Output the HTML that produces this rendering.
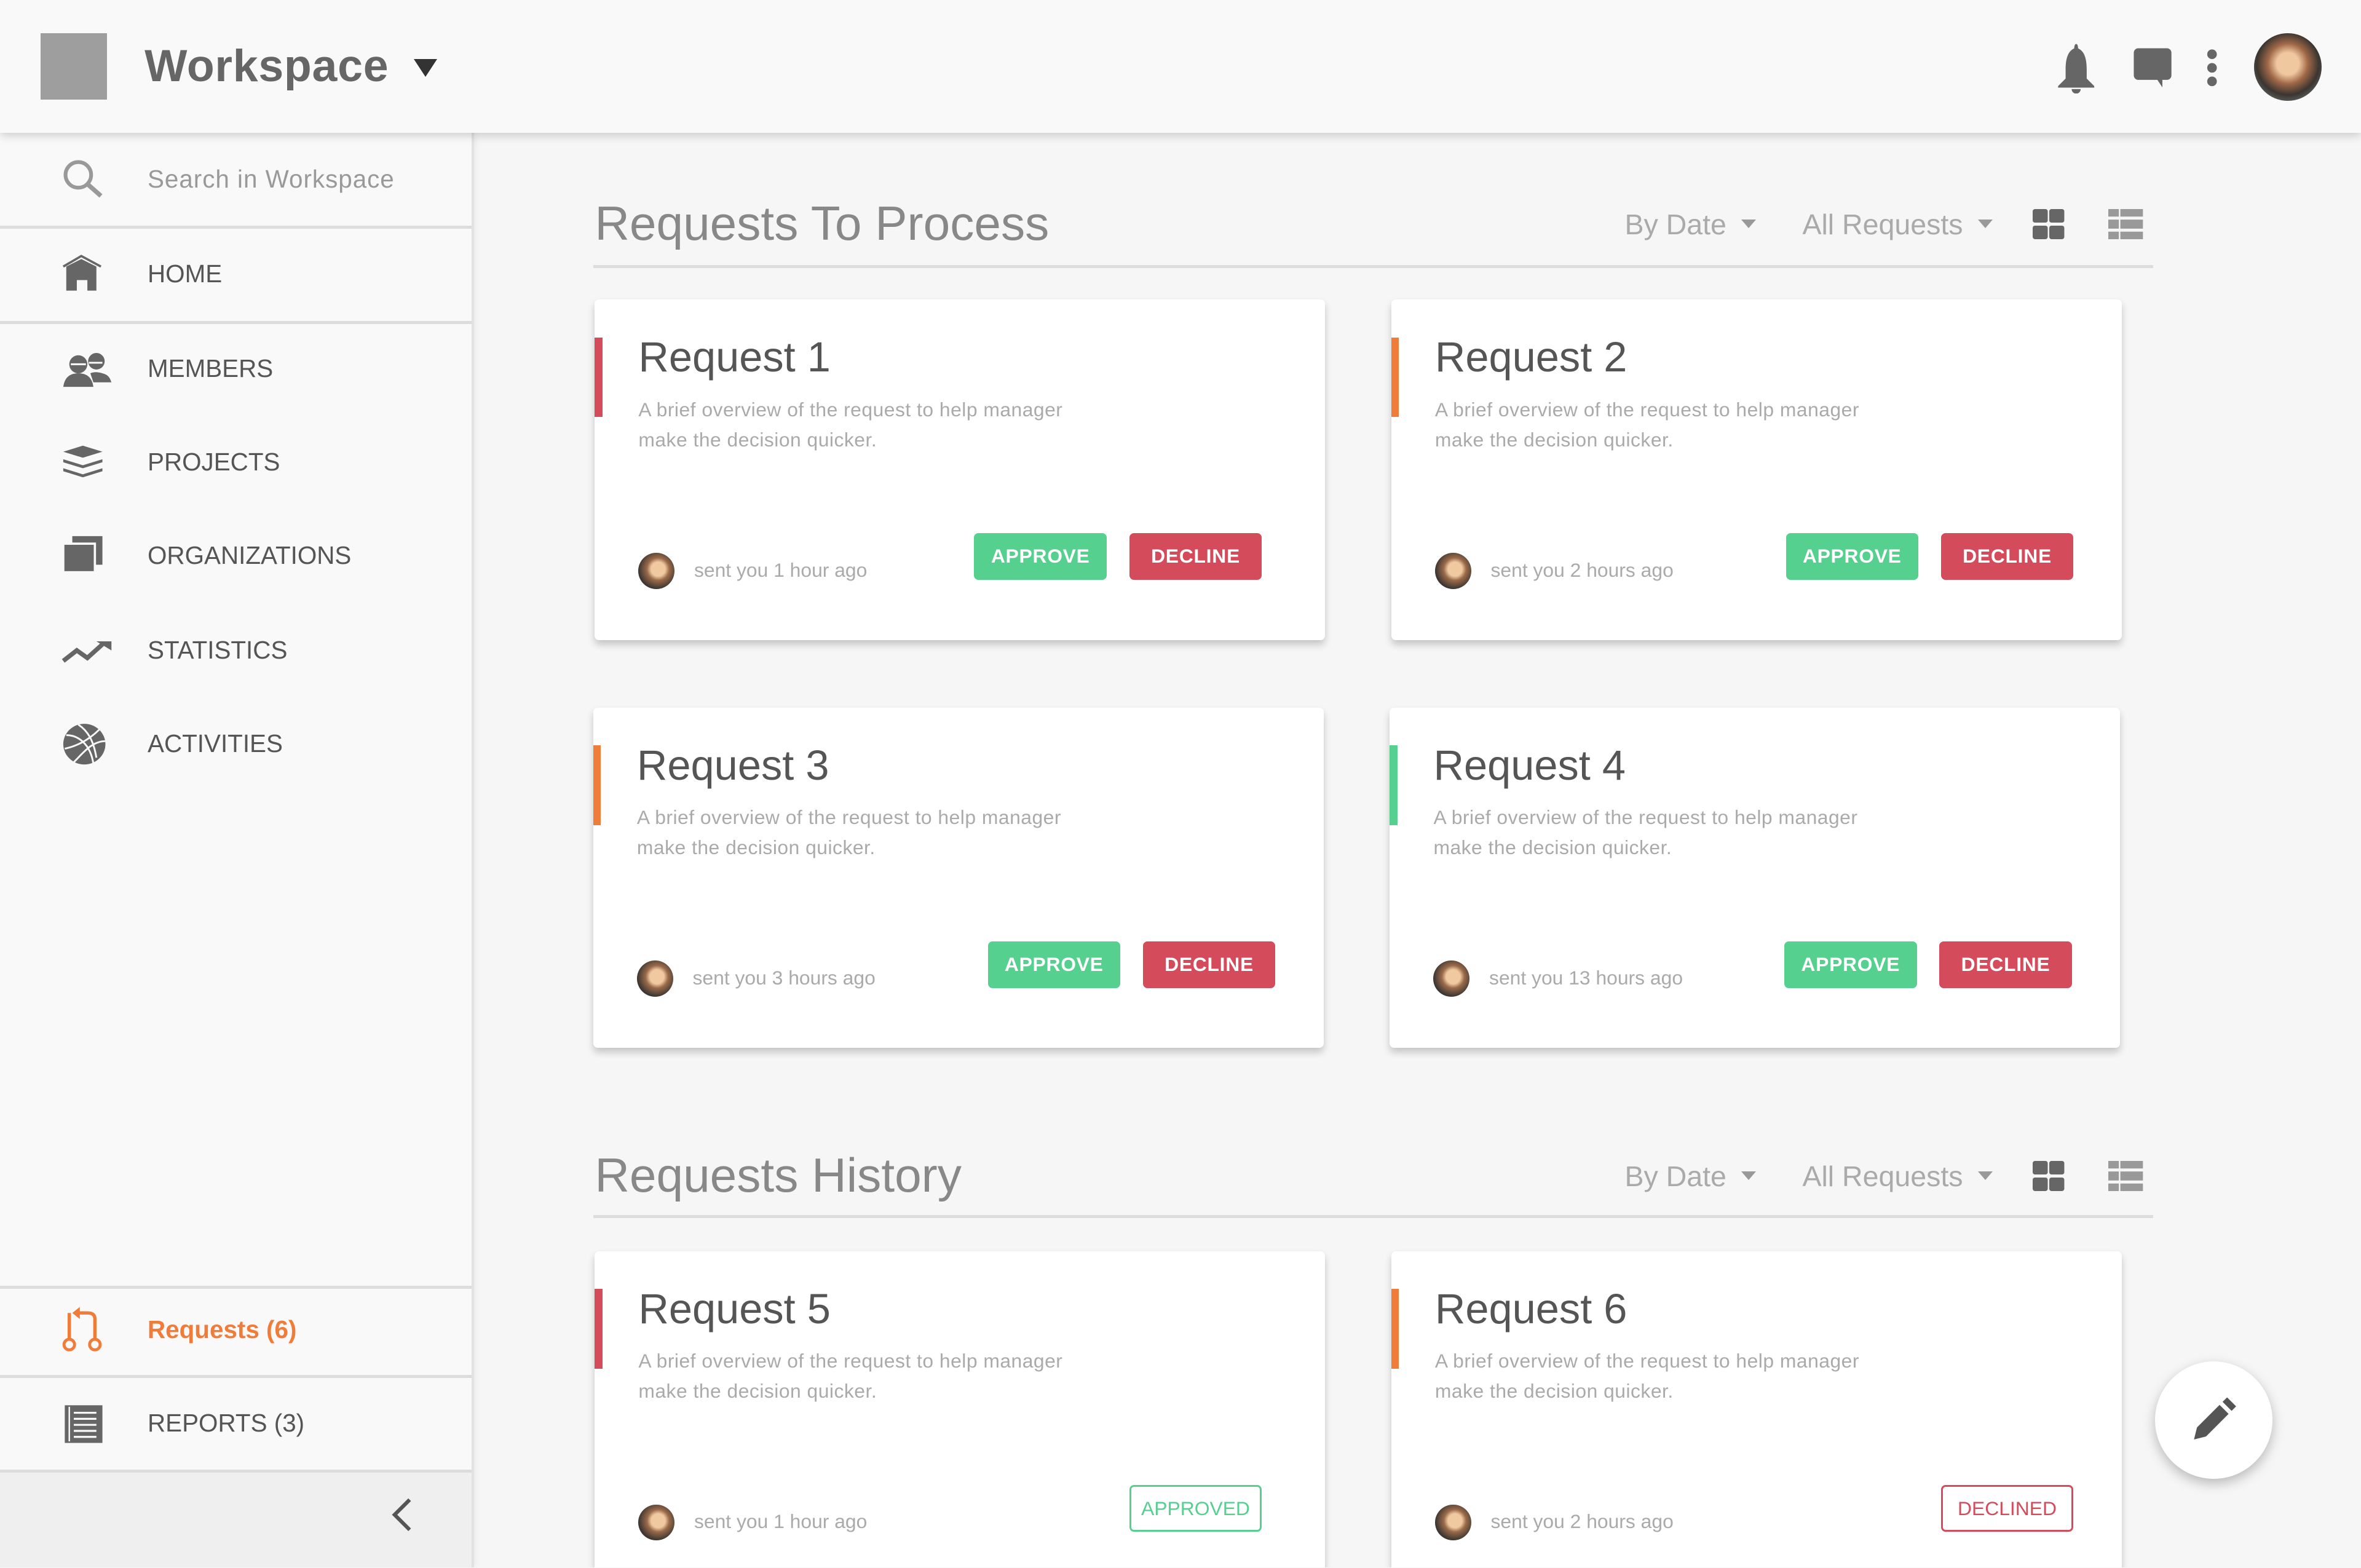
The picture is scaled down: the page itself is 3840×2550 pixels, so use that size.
<!DOCTYPE html>
<html><head><meta charset="utf-8"><style>
*{margin:0;padding:0;box-sizing:border-box}
html,body{width:3840px;height:2550px;overflow:hidden;background:#f6f6f6}
#r{zoom:2.449;width:1568px;height:1041px;position:relative;font-family:"Liberation Sans",sans-serif;background:#f6f6f6;overflow:hidden}
.hdr{position:absolute;left:0;top:0;width:1568px;height:88px;background:#f9f9f9;box-shadow:0 2px 6px rgba(0,0,0,.18);z-index:5}
.side{position:absolute;left:0;top:88px;width:315px;height:953px;background:#f9f9f9;border-right:2px solid #e2e2e2;box-shadow:1px 0 4px rgba(0,0,0,.06)}
.row{position:absolute;left:0;width:313px;height:62px;display:flex;align-items:center;color:#555;font-size:16.5px;letter-spacing:0}
.row svg{position:absolute;left:40px}
.row span{position:absolute;left:98px}
.line{position:absolute;left:0;width:313px;height:2px;background:#ddd}
.sec{position:absolute;left:395px;font-size:32px;color:#888;font-weight:normal}
.ul{position:absolute;left:394px;width:1036px;height:2px;background:#ddd}
.ctl{position:absolute;font-size:19px;color:#aaa}
.ctl i{display:inline-block;width:0;height:0;border-left:5px solid transparent;border-right:5px solid transparent;border-top:6px solid #999;margin-left:10px;vertical-align:4px}
.card{position:absolute;width:485px;height:226px;background:#fff;border-radius:3px;box-shadow:0 3px 5px rgba(0,0,0,.2)}
.bar{position:absolute;left:0;top:25px;width:5px;height:53px}
.card h2{position:absolute;left:29px;top:22px;font-size:28px;font-weight:normal;color:#555}
.card p{position:absolute;left:29px;top:63px;font-size:13px;line-height:20px;color:#aaa;letter-spacing:.2px}
.av{position:absolute;left:29px;top:168px;width:24px;height:24px;border-radius:50%;background:radial-gradient(circle at 55% 45%,#f0c9a0 0 25%,#9a6a4a 40%,#3b3530 70%,#889 100%)}
.st{position:absolute;left:66px;top:172px;font-size:13px;color:#aaa}
.btn{position:absolute;top:155px;width:88px;height:31px;border-radius:3px;color:#fff;font-size:13px;font-weight:bold;text-align:center;line-height:31px;letter-spacing:.3px}
.ap{left:252px;background:#55d08f}.dc{left:355px;background:#d44c5c}
.tag{position:absolute;top:155px;left:355px;width:88px;height:31px;border-radius:3px;font-size:13px;text-align:center;line-height:29px;background:#fff}
</style></head><body><div id="r">
<div class="hdr">
 <div style="position:absolute;left:27px;top:22px;width:44px;height:44px;background:#9e9e9e"></div>
 <div style="position:absolute;left:96px;top:26px;font-size:30px;font-weight:bold;color:#666;letter-spacing:.3px">Workspace</div>
 <div style="position:absolute;left:275px;top:39px;border-left:8px solid transparent;border-right:8px solid transparent;border-top:12px solid #333"></div>
 <svg style="position:absolute;left:1364px;top:28px" width="30" height="34" viewBox="0 0 30 34"><path d="M15 1c1.3 0 1.3 3 1.3 3C21 6 22 12 22 18v6l5 5v1H3v-1l5-5v-6c0-6 1-12 5.7-14 0 0 0-3 1.3-3z" fill="#666"/><path d="M12 31h6a3 3 0 0 1-6 0z" fill="#666"/></svg>
 <svg style="position:absolute;left:1416px;top:31px" width="27" height="28" viewBox="0 0 27 28"><rect x="1" y="1" width="25" height="21" rx="3" fill="#666"/><path d="M16 21l4 6 0-6z" fill="#666"/></svg>
 <svg style="position:absolute;left:1463px;top:31px" width="12" height="28"><circle cx="6" cy="5" r="3.2" fill="#666"/><circle cx="6" cy="14" r="3.2" fill="#666"/><circle cx="6" cy="23" r="3.2" fill="#666"/></svg>
 <div style="position:absolute;left:1497px;top:22px;width:45px;height:45px;border-radius:50%;background:radial-gradient(circle at 50% 45%,#f0c8a0 0 22%,#a06848 40%,#3b3530 62%,#8a9aa0 100%)"></div>
</div>
<div class="side">
 <div class="row" style="top:0"><svg width="30" height="30" viewBox="0 0 30 30"><circle cx="12" cy="12" r="8.5" fill="none" stroke="#999" stroke-width="2.5"/><path d="M18 18l9 8" stroke="#999" stroke-width="3"/></svg><span style="color:#999;letter-spacing:.4px">Search in Workspace</span></div>
 <div class="line" style="top:62px"></div>
 <div class="row" style="top:63px"><svg width="30" height="30" viewBox="0 0 30 30"><path d="M2 10L14 3l13 7" fill="none" stroke="#666" stroke-width="1.5"/><path d="M4 10L14 5l10 5v16h-6v-7h-7v7H4z" fill="#666"/></svg><span>HOME</span></div>
 <div class="line" style="top:125px"></div>
 <div class="row" style="top:126px"><svg width="36" height="30" viewBox="0 0 36 30"><circle cx="12" cy="12" r="6" fill="#666"/><path d="M2 27c1-7 5-9 10-9s9 2 10 9z" fill="#666"/><circle cx="24" cy="10" r="5.5" fill="#666"/><path d="M20 18c2-1 5-1 8 0 4 1 5 3 6 6H22z" fill="#666"/><path d="M7 12h10" stroke="#fff" stroke-width="1.2"/><path d="M19 11h9" stroke="#fff" stroke-width="1.2"/></svg><span>MEMBERS</span></div>
 <div class="row" style="top:188px"><svg width="30" height="30" viewBox="0 0 30 30"><path d="M2 8l13-4 13 4-13 4z" fill="#666"/><path d="M2 13l13 4 13-4v2l-13 4-13-4z" fill="#666"/><path d="M2 19l13 4 13-4v2l-13 4-13-4z" fill="#666"/></svg><span>PROJECTS</span></div>
 <div class="row" style="top:250px"><svg width="30" height="30" viewBox="0 0 30 30"><rect x="8" y="2" width="20" height="19" fill="#666"/><rect x="2" y="7" width="21" height="19" fill="#666" stroke="#f9f9f9" stroke-width="1.5"/></svg><span>ORGANIZATIONS</span></div>
 <div class="row" style="top:313px"><svg width="36" height="30" viewBox="0 0 36 30"><path d="M2 22l9-7 7 5 10-9" fill="none" stroke="#666" stroke-width="3"/><path d="M24 9h10v6z" fill="#666"/></svg><span>STATISTICS</span></div>
 <div class="row" style="top:375px"><svg width="32" height="32" viewBox="0 0 32 32"><ellipse cx="16" cy="16" rx="14" ry="13.5" fill="#666"/><path d="M4 10c8 0 16 6 18 19M12 3c6 4 10 10 12 22M3 19c10-2 19-8 25-15M9 28c6-6 12-14 21-14" fill="none" stroke="#f9f9f9" stroke-width="1.2"/></svg><span>ACTIVITIES</span></div>
 <div class="line" style="top:766px"></div>
 <div class="row" style="top:764px;color:#f07c3a;font-weight:bold"><svg width="30" height="32" viewBox="0 0 30 32"><circle cx="6" cy="26" r="3.5" fill="none" stroke="#f07c3a" stroke-width="2"/><circle cx="23" cy="26" r="3.5" fill="none" stroke="#f07c3a" stroke-width="2"/><path d="M6 22V5M23 22V9c0-3-2-4-5-4h-6" fill="none" stroke="#f07c3a" stroke-width="2.2"/><path d="M13 1l-5 4 5 4z" fill="#f07c3a"/></svg><span>Requests (6)</span></div>
 <div class="line" style="top:825px"></div>
 <div class="row" style="top:826px"><svg width="30" height="30" viewBox="0 0 30 30"><rect x="3" y="3" width="25" height="25" fill="#666"/><path d="M9 8h15M9 12h15M9 16h15M9 20h15M9 24h15" stroke="#f9f9f9" stroke-width="1.3"/><path d="M6 4v23" stroke="#f9f9f9" stroke-width="1"/></svg><span>REPORTS (3)</span></div>
 <div class="line" style="top:888px"></div>
 <div style="position:absolute;left:0;top:890px;width:313px;height:63px;background:#efefef"></div>
 <svg style="position:absolute;left:258px;top:906px" width="18" height="24"><path d="M14 2L4 12l10 10" fill="none" stroke="#555" stroke-width="2.5"/></svg>
</div>

<div class="sec" style="top:130px">Requests To Process</div>
<div class="ul" style="top:176px"></div>
<div class="ctl" style="left:1079px;top:138px">By Date<i></i></div>
<div class="ctl" style="left:1197px;top:138px">All Requests<i></i></div>
<svg style="position:absolute;left:1350px;top:139px" width="22" height="21"><rect x="0" y="0" width="10" height="9" rx="1.5" fill="#666"/><rect x="11" y="0" width="10" height="9" rx="1.5" fill="#666"/><rect x="0" y="11" width="10" height="9" rx="1.5" fill="#666"/><rect x="11" y="11" width="10" height="9" rx="1.5" fill="#666"/></svg>
<svg style="position:absolute;left:1400px;top:139px" width="24" height="21"><g fill="#999"><rect x="0" y="0" width="7" height="5"/><rect x="8" y="0" width="15" height="5"/><rect x="0" y="7" width="7" height="6"/><rect x="8" y="7" width="15" height="6"/><rect x="0" y="15" width="7" height="5"/><rect x="8" y="15" width="15" height="5"/></g></svg>

<div class="card" style="left:395px;top:199px"><div class="bar" style="background:#d44c5c"></div><h2>Request 1</h2><p>A brief overview of the request to help manager<br>make the decision quicker.</p><div class="av"></div><div class="st">sent you 1 hour ago</div><div class="btn ap">APPROVE</div><div class="btn dc">DECLINE</div></div>
<div class="card" style="left:924px;top:199px"><div class="bar" style="background:#f07c3a"></div><h2>Request 2</h2><p>A brief overview of the request to help manager<br>make the decision quicker.</p><div class="av"></div><div class="st">sent you 2 hours ago</div><div class="btn ap" style="left:262px">APPROVE</div><div class="btn dc" style="left:365px">DECLINE</div></div>
<div class="card" style="left:394px;top:470px"><div class="bar" style="background:#f07c3a"></div><h2>Request 3</h2><p>A brief overview of the request to help manager<br>make the decision quicker.</p><div class="av"></div><div class="st">sent you 3 hours ago</div><div class="btn ap" style="left:262px">APPROVE</div><div class="btn dc" style="left:365px">DECLINE</div></div>
<div class="card" style="left:923px;top:470px"><div class="bar" style="background:#55d08f"></div><h2>Request 4</h2><p>A brief overview of the request to help manager<br>make the decision quicker.</p><div class="av"></div><div class="st">sent you 13 hours ago</div><div class="btn ap" style="left:262px">APPROVE</div><div class="btn dc" style="left:365px">DECLINE</div></div>

<div class="sec" style="top:762px">Requests History</div>
<div class="ul" style="top:807px"></div>
<div class="ctl" style="left:1079px;top:770px">By Date<i></i></div>
<div class="ctl" style="left:1197px;top:770px">All Requests<i></i></div>
<svg style="position:absolute;left:1350px;top:771px" width="22" height="21"><rect x="0" y="0" width="10" height="9" rx="1.5" fill="#666"/><rect x="11" y="0" width="10" height="9" rx="1.5" fill="#666"/><rect x="0" y="11" width="10" height="9" rx="1.5" fill="#666"/><rect x="11" y="11" width="10" height="9" rx="1.5" fill="#666"/></svg>
<svg style="position:absolute;left:1400px;top:771px" width="24" height="21"><g fill="#999"><rect x="0" y="0" width="7" height="5"/><rect x="8" y="0" width="15" height="5"/><rect x="0" y="7" width="7" height="6"/><rect x="8" y="7" width="15" height="6"/><rect x="0" y="15" width="7" height="5"/><rect x="8" y="15" width="15" height="5"/></g></svg>

<div class="card" style="left:395px;top:831px"><div class="bar" style="background:#d44c5c"></div><h2>Request 5</h2><p>A brief overview of the request to help manager<br>make the decision quicker.</p><div class="av"></div><div class="st">sent you 1 hour ago</div><div class="tag" style="border:1.5px solid #55d08f;color:#55d08f">APPROVED</div></div>
<div class="card" style="left:924px;top:831px"><div class="bar" style="background:#f07c3a"></div><h2>Request 6</h2><p>A brief overview of the request to help manager<br>make the decision quicker.</p><div class="av"></div><div class="st">sent you 2 hours ago</div><div class="tag" style="left:365px;border:1.5px solid #d44c5c;color:#d44c5c">DECLINED</div></div>

<div style="position:absolute;left:1431px;top:904px;width:78px;height:78px;border-radius:50%;background:#fff;box-shadow:0 3px 8px rgba(0,0,0,.25)"></div>
<svg style="position:absolute;left:1454px;top:927px" width="32" height="32" viewBox="0 0 32 32"><path d="M3 29l2-8L20 6l6 6-15 15z" fill="#555"/><path d="M22 4l3-3 6 6-3 3z" fill="#555"/></svg>
</div></body></html>
